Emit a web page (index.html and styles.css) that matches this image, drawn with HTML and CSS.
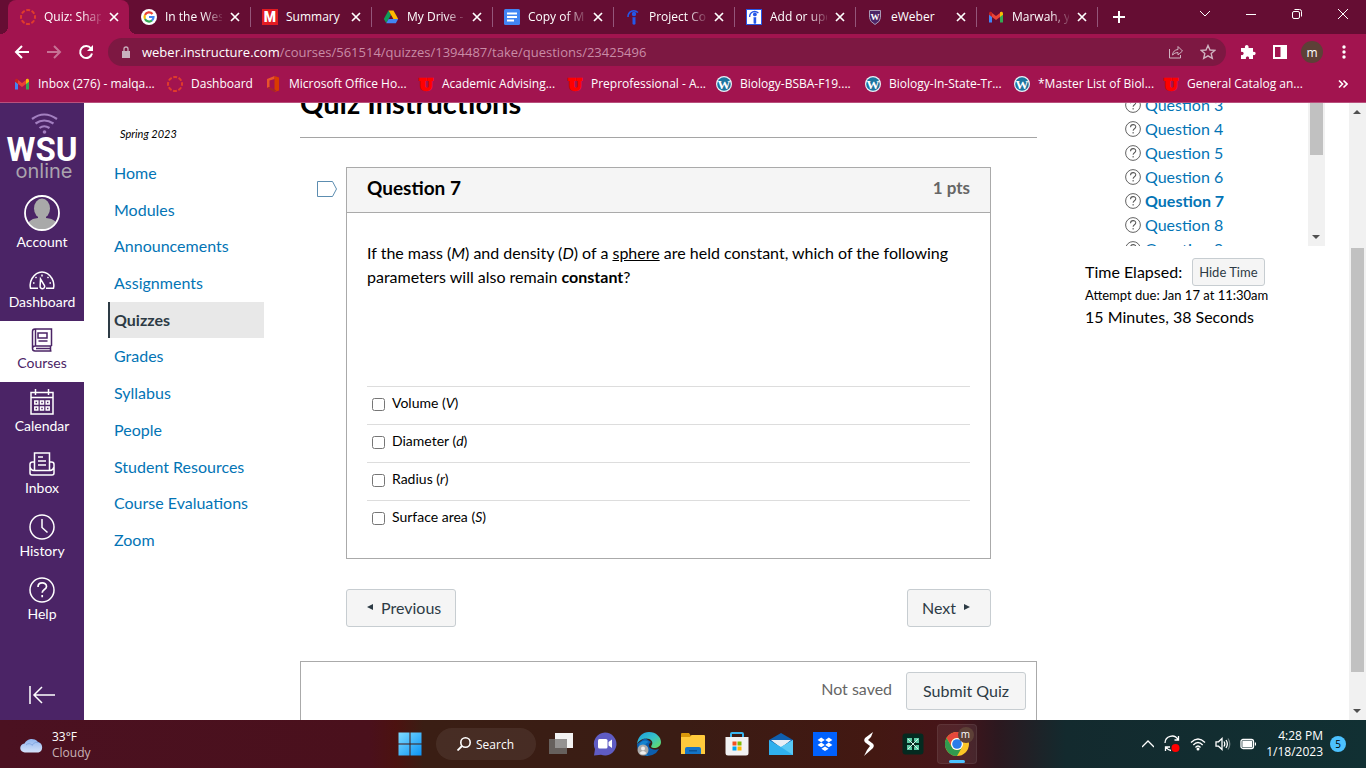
FILE: index.html
```
<!DOCTYPE html>
<html lang="en">
<head>
  <meta charset="UTF-8">
  <meta name="viewport" content="width=device-width, initial-scale=1">
  <title>Quiz: Shape</title>
  <link rel="stylesheet" href="styles.css">
</head>
<body>

  <!-- Shared icons -->
  <svg class="sprite" aria-hidden="true">
    <symbol id="close" viewBox="0 0 10 10"><path d="M1 1l8 8M9 1l-8 8" stroke="#fff" stroke-width="1.7"/></symbol>
    <symbol id="canvas" viewBox="0 0 16 16"><circle cx="8" cy="8" r="7" fill="none" stroke="#e03c2c" stroke-width="2" stroke-dasharray="3.9 1.6" stroke-dashoffset="2"/></symbol>
    <symbol id="gmail" viewBox="0 0 16 16">
      <path d="M1 4v9.5h3V7z" fill="#4285f4"/><path d="M15 4v9.5h-3V7z" fill="#34a853"/>
      <path d="M4 4l4 3 4-3v4l-4 3-4-3z" fill="#ea4335"/>
      <path d="M1 4.5C1 2.500 3 2.300 4 3.200V8L1 5.800z" fill="#c5221f"/><path d="M15 4.500c0-2-2-2.200-3-1.300V8l3-2.200z" fill="#fbbc04"/>
    </symbol>
    <symbol id="utah" viewBox="0 0 16 16"><text x="8" y="13.500" text-anchor="middle" font-family="DejaVu Serif" font-weight="bold" font-size="15" fill="#f00" stroke="#f00" stroke-width="2.400">U</text></symbol>
    <symbol id="wordpress" viewBox="0 0 16 16">
      <circle cx="8" cy="8" r="8" fill="#e9f3f7"/><circle cx="8" cy="8" r="6.800" fill="#1d759f"/>
      <text x="8" y="12.500" text-anchor="middle" font-family="Liberation Serif" font-weight="bold" font-size="13" fill="#fff">W</text>
    </symbol>
    <symbol id="indeed" viewBox="0 0 16 16"><path d="M3 8C3 2 9 0 13 3.500" fill="none" stroke="currentColor" stroke-width="1.600"/><circle cx="9" cy="5" r="2.200" fill="currentColor"/><path d="M7.500 8q1.500.6 3 0v7q-1.500 1.400-3 0z" fill="currentColor"/></symbol>
    <symbol id="question" viewBox="0 0 26 26"><circle cx="13" cy="13" r="12" fill="none" stroke="currentColor" stroke-width="1.500"/><path d="M9 10c0-5.500 8.500-5.200 8.500-.6 0 3.300-4.300 3-4.300 6.400M13.200 18v2.200" fill="none" stroke="currentColor" stroke-width="1.700"/></symbol>
  </svg>

  <header class="browser">
    <div class="tabs" role="tablist">
      <div class="tab active" role="tab">
        <svg class="favicon"><use href="#canvas"/></svg>
        <span class="tab-title">Quiz: Shape</span>
        <button class="tab-close" aria-label="Close"><svg><use href="#close"/></svg></button>
      </div>
      <div class="tab" role="tab">
        <svg class="favicon" viewBox="0 0 16 16"><circle cx="8" cy="8" r="8" fill="#fff"/><g fill="none" stroke-width="2.200"><path d="M11.500 5A4.500 4.500 0 0 0 4 6" stroke="#ea4335"/><path d="M4 6a4.500 4.500 0 0 0 0 4" stroke="#fbbc05"/><path d="M4 10a4.500 4.500 0 0 0 7 1.400" stroke="#34a853"/><path d="M11 11.400A4.500 4.500 0 0 0 12.500 8H8" stroke="#4285f4"/></g></svg>
        <span class="tab-title">In the West</span>
        <button class="tab-close" aria-label="Close"><svg><use href="#close"/></svg></button>
      </div>
      <div class="tab" role="tab">
        <svg class="favicon" viewBox="0 0 16 16"><path d="M0 0h16v16H0z" fill="#e31b23"/><text x="8" y="13" text-anchor="middle" font-family="Roboto" font-weight="900" font-size="14" fill="#fff">M</text></svg>
        <span class="tab-title">Summary</span>
        <button class="tab-close" aria-label="Close"><svg><use href="#close"/></svg></button>
      </div>
      <div class="tab" role="tab">
        <svg class="favicon" viewBox="0 0 16 16"><path d="M5.500 1.500L.8 10l2.400 4L8 6z" fill="#0f9d58"/><path d="M5.500 1.500h5L15.200 10h-4.800z" fill="#ffba00"/><path d="M5.600 10h9.600l-2.400 4.200H3.200z" fill="#4285f4"/></svg>
        <span class="tab-title">My Drive - G</span>
        <button class="tab-close" aria-label="Close"><svg><use href="#close"/></svg></button>
      </div>
      <div class="tab" role="tab">
        <svg class="favicon" viewBox="0 0 16 16"><rect width="16" height="16" rx="1.500" fill="#4285f4"/><path d="M3 4.500h10M3 8h10M3 11.500h7" stroke="#fff" stroke-width="1.800"/></svg>
        <span class="tab-title">Copy of Ma</span>
        <button class="tab-close" aria-label="Close"><svg><use href="#close"/></svg></button>
      </div>
      <div class="tab" role="tab">
        <svg class="favicon indeed"><use href="#indeed"/></svg>
        <span class="tab-title">Project Coo</span>
        <button class="tab-close" aria-label="Close"><svg><use href="#close"/></svg></button>
      </div>
      <div class="tab" role="tab">
        <svg class="favicon indeed boxed"><use href="#indeed"/></svg>
        <span class="tab-title">Add or upd</span>
        <button class="tab-close" aria-label="Close"><svg><use href="#close"/></svg></button>
      </div>
      <div class="tab" role="tab">
        <svg class="favicon" viewBox="0 0 16 16"><path d="M2.500 1.500h11v7q0 4-5.500 7-5.500-3-5.500-7z" fill="#4b2466" stroke="#a89ab5"/><text x="8" y="10.500" text-anchor="middle" font-family="Liberation Serif" font-weight="bold" font-size="9" fill="#fff">W</text></svg>
        <span class="tab-title">eWeber</span>
        <button class="tab-close" aria-label="Close"><svg><use href="#close"/></svg></button>
      </div>
      <div class="tab" role="tab">
        <svg class="favicon"><use href="#gmail"/></svg>
        <span class="tab-title">Marwah, yo</span>
        <button class="tab-close" aria-label="Close"><svg><use href="#close"/></svg></button>
      </div>
      <button class="new-tab" aria-label="New tab"><svg viewBox="0 0 12 12"><path d="M6 0v12M0 6h12" stroke="#fff" stroke-width="2"/></svg></button>
      <div class="window-buttons">
        <button aria-label="Search tabs"><svg viewBox="0 0 12 12"><path d="M1 3l5 5 5-5"/></svg></button>
        <button aria-label="Minimize"><svg viewBox="0 0 12 12"><path d="M1 6.500h10"/></svg></button>
        <button aria-label="Restore"><svg viewBox="0 0 12 12"><rect x="1.500" y="3.500" width="7" height="7" rx="1.500"/><path d="M3.500 1.500h5q2 0 2 2v5"/></svg></button>
        <button aria-label="Close window"><svg viewBox="0 0 12 12"><path d="M1 1l10 10M11 1L1 11"/></svg></button>
      </div>
    </div>

    <div class="toolbar">
      <button aria-label="Back"><svg viewBox="0 0 16 16"><path d="M15 8H2M8 2L2 8l6 6"/></svg></button>
      <button class="dim" aria-label="Forward"><svg viewBox="0 0 16 16"><path d="M1 8h13M8 2l6 6-6 6"/></svg></button>
      <button aria-label="Reload"><svg viewBox="0 0 16 16"><path d="M13 4.500A6 6 0 1 0 14 9.500"/><path d="M15 1v6H9z" fill="#fff" stroke="none"/></svg></button>
      <div class="address">
        <svg class="lock" viewBox="0 0 8 12"><path d="M0 5h8v7H0z" fill="#c9b0bd"/><path d="M2 5V3q0-2 2-2t2 2v2" fill="none" stroke="#c9b0bd" stroke-width="1.300"/></svg>
        <div class="url" role="textbox" aria-label="Address">weber.instructure.com<span>/courses/561514/quizzes/1394487/take/questions/23425496</span></div>
        <svg class="address-icon" viewBox="0 0 16 16"><path d="M1.500 5v9h11v-3M4.500 11Q5 6 10 5.500V2.500L14.500 7 10 11V8.500q-3.500 0-5.500 2.500z"/></svg>
        <svg class="address-icon" viewBox="0 0 16 16"><path d="M8 1.500l2 4.500 4.800.4-3.600 3.200 1.100 4.800L8 11.800l-4.300 2.600 1.100-4.800L1.200 6.400 6 6z" stroke-width="1.400"/></svg>
      </div>
      <button aria-label="Extensions"><svg viewBox="0 0 16 16"><path d="M1 4h4c-1-4 4.500-4 3.500 0H13v4c3.500-1 3.500 4 0 3v4H9c1-3.500-4-3.500-3 0H1v-4c3.500 1 3.500-4 0-3z" fill="#fff" stroke="none"/></svg></button>
      <button aria-label="Side panel"><svg viewBox="0 0 16 16"><path d="M2 2h12v12H2z"/><path d="M9.500 2H14v12H9.500z" fill="#fff"/></svg></button>
      <button class="profile">m</button>
      <button aria-label="Menu"><svg viewBox="0 0 16 16"><g fill="#fff" stroke="none"><circle cx="8" cy="3" r="1.700"/><circle cx="8" cy="8" r="1.700"/><circle cx="8" cy="13" r="1.700"/></g></svg></button>
    </div>

    <nav class="bookmarks">
      <a href="#"><svg><use href="#gmail"/></svg>Inbox (276) - malqa...</a>
      <a href="#"><svg><use href="#canvas"/></svg>Dashboard</a>
      <a href="#"><svg viewBox="0 0 16 16"><path d="M9.500 0L2 3v9l2.500-1V4.500l5-1.500z" fill="#e8542a"/><path d="M9.500 0L14 1.500v13L9.500 16z" fill="#d83b01"/><path d="M4.500 11L2 12l7.500 4 2-1.500z" fill="#a4262c"/></svg>Microsoft Office Ho...</a>
      <a href="#"><svg><use href="#utah"/></svg>Academic Advising...</a>
      <a href="#"><svg><use href="#utah"/></svg>Preprofessional - A...</a>
      <a href="#"><svg><use href="#wordpress"/></svg>Biology-BSBA-F19....</a>
      <a href="#"><svg><use href="#wordpress"/></svg>Biology-In-State-Tr...</a>
      <a href="#"><svg><use href="#wordpress"/></svg>*Master List of Biol...</a>
      <a href="#"><svg><use href="#utah"/></svg>General Catalog an...</a>
      <button class="more" aria-label="More bookmarks"><svg viewBox="0 0 10 10"><path d="M1 1.500L4.500 5 1 8.500M5.500 1.500L9 5 5.500 8.500" fill="none" stroke="#fff" stroke-width="1.600"/></svg></button>
    </nav>
  </header>

  <div class="page">
    <nav class="global-nav">
      <a class="logo" href="#" aria-label="WSU online">
        <svg viewBox="0 0 84 85">
          <g fill="none" stroke="#a37fc0" stroke-width="2.200"><path d="M32 16q12-9 25 0M35.500 20.500q8.500-6 18 0M39.500 25q4.500-3.500 10 0"/></g>
          <circle cx="44.500" cy="29" r="1.800" fill="#a37fc0"/>
          <text x="42" y="58" text-anchor="middle" font-family="Roboto" font-weight="bold" font-size="33" fill="#fff">WSU</text>
          <text x="44" y="75" text-anchor="middle" font-family="Inter" font-size="20" fill="#aaa3ae">online</text>
        </svg>
      </a>
      <a href="#">
        <svg width="36" height="36" viewBox="0 0 36 36"><clipPath id="face"><circle cx="18" cy="18" r="16.500"/></clipPath><g clip-path="url(#face)" fill="#a9a9a9"><ellipse cx="18" cy="13.500" rx="8" ry="10"/><path d="M14 20h8v3q13 1 13 13H2q0-12 12-13z"/></g><circle cx="18" cy="18" r="17" fill="none" stroke="#fff" stroke-width="1.800"/></svg>
        Account
      </a>
      <a href="#">
        <svg width="26" height="23" viewBox="0 0 26 23"><g fill="none" stroke="#fff" stroke-width="1.500"><path d="M9 20.200H1.500Q.3 15 3 10.500 7 4 13 4t10 6.500q2.700 4.500 1.500 9.700H17"/><path d="M11.500 11l4 6.500a2.300 2.300 0 1 1-4.400.5z"/><path d="M13 6.500v2M6.500 9l1 1M19.500 9l-1 1M4 15h1.500M20.500 15H22"/></g></svg>
        Dashboard
      </a>
      <a class="active" href="#">
        <svg width="22" height="24" viewBox="0 0 22 24"><g fill="none" stroke="currentColor" stroke-width="1.500"><path d="M20.500 18V1H4Q1.500 1 1.500 3.500v17Q1.500 23 4 23h16.500M20.500 18H4q-2.500 0-2.500 2.500M19.500 18v5M4.500 1v17M5 20.500h14"/><path d="M7 5h9v5H7zM7.500 13h9"/></g></svg>
        Courses
      </a>
      <a href="#">
        <svg width="24" height="26" viewBox="0 0 24 26"><g fill="none" stroke="#fff" stroke-width="1.500"><path d="M1 3.500h22V25H1zM1 8.500h22M5.500 0v6M18.500 0v6"/><path d="M4.800 12h3v3h-3zM10.500 12h3v3h-3zM16.200 12h3v3h-3zM4.800 18h3v3h-3zM10.500 18h3v3h-3zM16.200 18h3v3h-3z"/></g></svg>
        Calendar
      </a>
      <a href="#">
        <svg width="26" height="25" viewBox="0 0 26 25"><g fill="none" stroke="#fff" stroke-width="1.500"><path d="M5.500 18V1h15v17M5.500 10H3.500Q1 10 1 12.500V21q0 2 2 2h20q2 0 2-2v-8.500q0-2.500-2.500-2.500h-2M1 15q1 3.500 4 3.500h16q3 0 4-3.500M9 5h5M9 9h8M9 13h8"/></g></svg>
        Inbox
      </a>
      <a href="#">
        <svg width="26" height="26" viewBox="0 0 26 26"><g fill="none" stroke="#fff" stroke-width="1.500"><circle cx="13" cy="13" r="12"/><path d="M13 5v8.500l5.500 5"/></g></svg>
        History
      </a>
      <a href="#">
        <svg width="26" height="26"><use href="#question"/></svg>
        Help
      </a>
      <button class="collapse" aria-label="Minimize navigation"><svg viewBox="0 0 26 18"><path d="M1 0v18M26 9H5M13 1L5 9l8 8" fill="none" stroke="#fff" stroke-width="1.500"/></svg></button>
    </nav>

    <nav class="course-menu">
      <p>Spring 2023</p>
      <ul>
        <li><a href="#">Home</a></li>
        <li><a href="#">Modules</a></li>
        <li><a href="#">Announcements</a></li>
        <li><a href="#">Assignments</a></li>
        <li><a class="active" href="#">Quizzes</a></li>
        <li><a href="#">Grades</a></li>
        <li><a href="#">Syllabus</a></li>
        <li><a href="#">People</a></li>
        <li><a href="#">Student Resources</a></li>
        <li><a href="#">Course Evaluations</a></li>
        <li><a href="#">Zoom</a></li>
      </ul>
    </nav>

    <main class="quiz">
      <h1>Quiz Instructions</h1>
      <div class="question-row">
        <button class="flag" aria-label="Flag question"><svg viewBox="0 0 20 16"><path d="M.5.500h15l4 7.500-4 7.500H.5z" fill="none" stroke="#5c8db0"/></svg></button>
        <section class="question">
          <div class="question-header">
            <h2>Question 7</h2>
            <span>1 pts</span>
          </div>
          <div class="question-body">
            <p>If the mass (<i>M</i>) and density (<i>D</i>) of a <u>sphere</u> are held constant, which of the following parameters will also remain <b>constant</b>?</p>
            <div class="answers">
              <div class="answer"><input type="checkbox" id="a1"><label for="a1">Volume (<i>V</i>)</label></div>
              <div class="answer"><input type="checkbox" id="a2"><label for="a2">Diameter (<i>d</i>)</label></div>
              <div class="answer"><input type="checkbox" id="a3"><label for="a3">Radius (<i>r</i>)</label></div>
              <div class="answer"><input type="checkbox" id="a4"><label for="a4">Surface area (<i>S</i>)</label></div>
            </div>
          </div>
        </section>
      </div>
      <div class="pager">
        <button class="btn"><svg viewBox="0 0 6 8"><path d="M6 1v6L0 4z" fill="currentColor"/></svg>Previous</button>
        <button class="btn">Next<svg viewBox="0 0 6 8"><path d="M0 1v6l6-3z" fill="currentColor"/></svg></button>
      </div>
      <div class="submit-bar">
        <span>Not saved</span>
        <button class="btn">Submit Quiz</button>
      </div>
    </main>

    <aside class="sidebar">
      <div class="question-list">
        <ul>
          <li><svg><use href="#question"/></svg><a href="#">Question 3</a></li>
          <li><svg><use href="#question"/></svg><a href="#">Question 4</a></li>
          <li><svg><use href="#question"/></svg><a href="#">Question 5</a></li>
          <li><svg><use href="#question"/></svg><a href="#">Question 6</a></li>
          <li><svg><use href="#question"/></svg><a class="current" href="#">Question 7</a></li>
          <li><svg><use href="#question"/></svg><a href="#">Question 8</a></li>
          <li><svg><use href="#question"/></svg><a href="#">Question 9</a></li>
        </ul>
        <div class="scrollbar list-scroll">
          <div class="thumb"></div>
          <svg viewBox="0 0 8 4"><path d="M0 0h8L4 4z" fill="#505050"/></svg>
        </div>
      </div>
      <div class="timer">
        <div class="elapsed">Time Elapsed: <button class="btn small">Hide Time</button></div>
        <p class="due">Attempt due: Jan 17 at 11:30am</p>
        <p>15 Minutes, 38 Seconds</p>
      </div>
    </aside>

    <div class="scrollbar page-scroll">
      <svg viewBox="0 0 8 4"><path d="M0 4h8L4 0z" fill="#505050"/></svg>
      <div class="track"><div class="thumb"></div></div>
      <svg viewBox="0 0 8 4"><path d="M0 0h8L4 4z" fill="#505050"/></svg>
    </div>
  </div>

  <footer class="taskbar">
    <div class="weather">
      <svg viewBox="0 0 24 16"><defs><linearGradient id="cloud" x2="0" y2="1"><stop stop-color="#8fb4ee"/><stop offset="1" stop-color="#d4e2fa"/></linearGradient></defs><path d="M5 15.500a4.500 4.500 0 0 1-.5-9A8 8 0 0 1 18 5a5.500 5.500 0 0 1 .5 10.500z" fill="url(#cloud)"/><path d="M6 8q3-3 6.500.5M12 8q3-4 7-2.500" fill="none" stroke="#7ca2de" stroke-width=".8"/></svg>
      <div>33°F<br><span>Cloudy</span></div>
    </div>

    <div class="apps">
      <button class="app" aria-label="Start"><svg viewBox="0 0 24 24"><defs><linearGradient id="win" x2="1" y2="1"><stop stop-color="#7fdcff"/><stop offset="1" stop-color="#0b93f5"/></linearGradient></defs><path d="M.5.500h11v11H.5zM12.500.500h11v11h-11zM.5 12.500h11v11H.5zM12.500 12.500h11v11h-11z" fill="url(#win)"/></svg></button>
      <button class="search"><svg viewBox="0 0 14 14"><circle cx="8.500" cy="5.500" r="4.700" fill="none" stroke="#fff" stroke-width="1.600"/><path d="M5 9l-4.500 4.500" stroke="#fff" stroke-width="1.800"/></svg>Search</button>
      <button class="app" aria-label="Task view"><svg viewBox="0 0 24 24"><path d="M6 1h18v15H6z" fill="#f2f2f2"/><path d="M0 7h18v15H0z" fill="#6b6865" opacity=".9"/><path d="M6 7h12v9H6z" fill="#949291"/></svg></button>
      <button class="app" aria-label="Chat"><svg viewBox="0 0 24 24"><path d="M12 .5a11.500 11.500 0 1 1-4 22.300L1 23.500l1-6.500A11.500 11.500 0 0 1 12 .5z" fill="#5f5cc4"/><rect x="5" y="7" width="9.500" height="9.500" rx="1.500" fill="#fff"/><path d="M15.500 10l3.500-2.500V16l-3.500-2.500z" fill="#fff"/></svg></button>
      <button class="app" aria-label="Edge"><svg viewBox="0 0 24 24"><defs><linearGradient id="edge" x2="1" y2="1"><stop stop-color="#1b9de2"/><stop offset=".5" stop-color="#35c1c8"/><stop offset="1" stop-color="#6be05a"/></linearGradient></defs><path d="M0 12Q0 20 6 23q7 2.500 13-2l3-4q-5 2-9-1-3-3 1-6L8 6z" fill="#0c5eae"/><path d="M0 12C1 4 6 0 12 0c7 0 12 5 12 10 0 4-3.500 6-7 6-2.500 0-3.500-1-2.500-2.500C17 10 14 6.500 9 6.500 5 6.500 1.500 9 0 12z" fill="url(#edge)"/><path d="M8 15q0-4 4-5-4-3-8 0-4 4-1 9 3 4 8 5-3-4-3-9z" fill="#1484d0"/><circle cx="6" cy="18" r="5.500" fill="#aaa"/><circle cx="6" cy="16.500" r="2" fill="#eee"/><path d="M2.500 21q3.500-4 7 0-3.500 3-7 0z" fill="#eee"/></svg></button>
      <button class="app" aria-label="File Explorer"><svg viewBox="0 0 24 24"><path d="M0 2q0-1 1-1h7l2 3v4H0z" fill="#d9980b"/><path d="M0 5h9l1.500-2H23q1 0 1 1v18H0z" fill="#ffca3c"/><path d="M4 22v-5q0-2 2-2h12q2 0 2 2v5z" fill="#1474c6"/><path d="M8 18h8v1.500H8z" fill="#0b5396"/></svg></button>
      <button class="app" aria-label="Microsoft Store"><svg viewBox="0 0 24 24"><path d="M6 7V2q0-1 1-1h10q1 0 1 1v5" fill="none" stroke="#39b5f0" stroke-width="2"/><path d="M.5 5h23v16q0 2.500-2.500 2.500H3Q.5 23.500.5 21z" fill="#f2f2f2"/><path d="M7.500 9.500h4v4h-4z" fill="#f25022"/><path d="M12.500 9.500h4v4h-4z" fill="#7fba00"/><path d="M7.500 14.500h4v4h-4z" fill="#00a4ef"/><path d="M12.500 14.500h4v4h-4z" fill="#ffb900"/></svg></button>
      <button class="app" aria-label="Mail"><svg viewBox="0 0 24 24"><path d="M0 8l12-7 12 7v3H0z" fill="#0f5fae"/><path d="M2 8h20L12 16z" fill="#e7eef6"/><path d="M0 8l12 7 12-7v15H0z" fill="#30b0ee"/><path d="M12 15L24 8v15z" fill="#58c8f5"/></svg></button>
      <button class="app" aria-label="Dropbox"><svg viewBox="0 0 24 24"><path d="M0 0h24v24H0z" fill="#0061fe"/><path d="M8.200 5.500l3.600 2.400-3.600 2.400-3.600-2.400zM15.800 5.500l3.600 2.400-3.600 2.400-3.600-2.400zM8.200 10.500l3.600 2.400-3.600 2.400-3.600-2.400zM15.800 10.500l3.600 2.400-3.600 2.400-3.600-2.400zM12 14.500l3.600 2.300L12 19l-3.600-2.200z" fill="#fff"/></svg></button>
      <button class="app" aria-label="S app"><svg viewBox="0 0 24 24"><path d="M16 0l-8 6q-2 3 1 5l4 3-3 4-3 6 9-8q2-3-1-5l-4-3 3-3z" fill="#fff"/></svg></button>
      <button class="app" aria-label="Notes"><svg viewBox="0 0 24 24"><rect x="1.500" y="1.500" width="21" height="21" rx="3" fill="#042a20"/><path d="M6 6h5v3l-2 2H6zM13 6h5v5h-3l-2-2zM6 13h3l2 2v3H6zM15 13h3v5h-5v-3z" fill="#5cc9a4"/><path d="M7 7l10 10M17 7L7 17" stroke="#d6f5e9"/></svg></button>
      <button class="app open" aria-label="Chrome">
        <svg viewBox="0 0 24 24"><circle cx="12" cy="12" r="12" fill="#fbc116"/><path d="M1.600 6A12 12 0 0 1 22.400 6H12a6 6 0 0 0-5.200 9z" fill="#e33b2e"/><path d="M1.600 6A12 12 0 0 0 12 24l5.200-9A6 6 0 0 1 6.800 15z" fill="#229342"/><circle cx="12" cy="12" r="6" fill="#fff"/><circle cx="12" cy="12" r="4.800" fill="#1a73e8"/></svg>
        <span class="app-user">m</span>
      </button>
    </div>

    <div class="tray">
      <svg width="12" height="12" viewBox="0 0 12 12"><path d="M0 9l6-6 6 6"/></svg>
      <svg width="18" height="18" viewBox="0 0 18 18"><path d="M2 8A7 7 0 0 1 15 4.500M15.500 1v4h-4M8 15.500A7 7 0 0 1 3 12M7 12H2.500v4"/><circle cx="12.500" cy="13" r="4" fill="#f00" stroke="none"/></svg>
      <svg width="16" height="14" viewBox="0 0 16 14"><path d="M1 5.500q7-7 14 0M3.300 8q4.700-5 9.400 0M5.500 10.500q2.500-3 5 0"/><circle cx="8" cy="12" r="1.500" fill="#fff" stroke="none"/></svg>
      <svg width="16" height="14" viewBox="0 0 16 14"><path d="M1 4.800h2.500L7 1.500v11L3.500 9.200H1zM9 4.500q1.500 2.500 0 5M11 3q2.700 4 0 8"/><path d="M13 1.500q3.500 5.500 0 11" opacity=".4"/></svg>
      <svg width="16" height="12" viewBox="0 0 16 12"><rect x="1" y="1.500" width="12.500" height="9" rx="2"/><path d="M3 3.500h8.500v5H3z" fill="#fff"/><path d="M15.500 4.500v3"/></svg>
      <div class="clock">4:28 PM<br>1/18/2023</div>
      <span class="badge">5</span>
    </div>
  </footer>

</body>
</html>
```

FILE: styles.css
```
* {
  box-sizing: border-box;
}

body {
  margin: 0;
  height: 100vh;
  display: flex;
  flex-direction: column;
  overflow: hidden;
  font-family: Lato, sans-serif;
  font-size: 16px;
  line-height: 24px;
  color: #000;
  background: #fff;
}

button {
  font-family: inherit;
  padding: 0;
  border: none;
  background: none;
  color: inherit;
  cursor: pointer;
}

a {
  color: #0374b5;
  text-decoration: none;
}

h1, h2, p, ul {
  margin: 0;
  padding: 0;
}

ul {
  list-style: none;
}

svg {
  display: block;
  flex-shrink: 0;
}

.sprite {
  display: none;
}

/* Browser */
.browser,
.taskbar {
  font-family: "Open Sans", sans-serif;
  font-size: 12px;
  line-height: 16px;
  color: #fff;
}

.browser {
  background: #a2144f;
  border-bottom: 1px solid #b8507c;
}

.tabs {
  height: 34px;
  display: flex;
  padding-left: 8px;
  background: #650d33;
}

.tab {
  position: relative;
  flex: 0 1 121px;
  min-width: 0;
  display: flex;
  align-items: center;
  gap: 8px;
  padding: 0 10px 0 12px;
}

.tab:not(.active)::after {
  content: "";
  position: absolute;
  right: -1px;
  top: 7px;
  width: 1px;
  height: 20px;
  background: #94567a;
}

.tab.active {
  background: #a2144f;
  border-radius: 8px 8px 0 0;
}

.tab.active::before,
.tab.active::after {
  content: "";
  position: absolute;
  bottom: 0;
  width: 8px;
  height: 8px;
}

.tab.active::before {
  left: -8px;
  background: radial-gradient(circle at 0 0, transparent 8px, #a2144f 8px);
}

.tab.active::after {
  right: -8px;
  background: radial-gradient(circle at 100% 0, transparent 8px, #a2144f 8px);
}

.favicon {
  width: 16px;
  height: 16px;
}

.indeed {
  color: #2557e8;
}

.indeed.boxed {
  background: #fff;
  border: 1px solid #2557e8;
}

.tab-title {
  flex: 1;
  overflow: hidden;
  white-space: nowrap;
  -webkit-mask-image: linear-gradient(to right, #000 38px, transparent 60px);
  mask-image: linear-gradient(to right, #000 38px, transparent 60px);
}

.tab:nth-child(3) .tab-title,
.tab:nth-child(8) .tab-title {
  -webkit-mask-image: none;
  mask-image: none;
}

.tab-close svg {
  width: 10px;
  height: 10px;
}

.new-tab {
  width: 44px;
}

.new-tab svg {
  width: 12px;
  height: 12px;
  margin: auto;
}

.window-buttons {
  display: flex;
  margin-left: auto;
  padding-bottom: 6px;
}

.window-buttons button {
  width: 46px;
}

.window-buttons svg {
  width: 12px;
  height: 12px;
  margin: auto;
  fill: none;
  stroke: #fff;
}

.toolbar {
  height: 34px;
  display: flex;
  align-items: center;
  gap: 16px;
  padding: 2px 14px 0;
}

.toolbar > button svg {
  width: 16px;
  height: 16px;
  fill: none;
  stroke: #fff;
  stroke-width: 2;
}

.toolbar .dim {
  opacity: 0.4;
}

.address {
  flex: 1;
  height: 28px;
  display: flex;
  align-items: center;
  gap: 16px;
  margin: 0 -2px;
  padding: 0 10px 0 14px;
  border-radius: 14px;
  background: #7d1842;
}

.lock {
  width: 8px;
  height: 12px;
}

.url {
  flex: 1;
  font-size: 13px;
  margin-left: -4px;
}

.url span {
  color: #c98ba6;
}

.address-icon {
  width: 16px;
  height: 16px;
  fill: none;
  stroke: #d0b4c1;
}

.profile {
  width: 22px;
  height: 22px;
  margin: 0 -3px;
  border-radius: 50%;
  background: #5d4037;
  font-size: 12px;
}

.bookmarks {
  height: 34px;
  display: grid;
  grid-template-columns: 153px 98px 153px repeat(6, 149px) auto;
  align-items: center;
  padding: 0 18px 2px 14px;
}

.bookmarks a {
  display: flex;
  gap: 8px;
  color: #fff;
  white-space: nowrap;
}

.bookmarks a svg {
  width: 16px;
  height: 16px;
}

.more {
  justify-self: end;
}

.more svg {
  width: 10px;
  height: 10px;
}

/* Page */
.page {
  flex: 1;
  min-height: 0;
  display: flex;
  overflow: hidden;
}

.global-nav {
  width: 84px;
  flex-shrink: 0;
  display: flex;
  flex-direction: column;
  background: #4b2466;
}

.global-nav a {
  display: flex;
  flex-direction: column;
  align-items: center;
  padding: 7px 0 8px;
  font-size: 14px;
  line-height: 22px;
  color: #fff;
}

.global-nav .logo {
  padding: 0;
}

.logo svg {
  width: 84px;
  height: 85px;
}

.global-nav a.active {
  background: #fff;
  color: #4b2466;
}

.collapse {
  margin: auto auto 16px;
}

.collapse svg {
  width: 26px;
  height: 18px;
}

.course-menu {
  width: 180px;
  flex-shrink: 0;
  padding: 22px 0 0 24px;
}

.course-menu p {
  padding-left: 12px;
  font-size: 11px;
  font-style: italic;
  line-height: 18px;
}

.course-menu ul {
  min-height: 403px;
  margin-top: 12px;
  display: flex;
  flex-direction: column;
  justify-content: space-between;
}

.course-menu a {
  display: block;
  padding: 6px;
}

.course-menu .active {
  padding-left: 4px;
  border-left: 2px solid #2d3b45;
  background: #e8e8e8;
  color: #2d3b45;
  font-weight: bold;
}

.quiz {
  flex: 1;
  min-width: 0;
  margin: 0 48px 0 36px;
}

.quiz h1 {
  margin-top: -18px;
  padding-bottom: 16px;
  border-bottom: 1px solid #a5a5a5;
  font-size: 29px;
  line-height: 36px;
}

.question-row {
  display: flex;
  align-items: flex-start;
  margin: 29px 46px 0 17px;
}

.flag {
  margin: 14px 9px 0 0;
}

.flag svg {
  width: 20px;
  height: 16px;
}

.question {
  flex: 1;
  border: 1px solid #aaa;
}

.question-header {
  display: flex;
  justify-content: space-between;
  padding: 8px 20px 12px;
  border-bottom: 1px solid #aaa;
  background: #f5f5f5;
  font-size: 17px;
  font-weight: bold;
  color: #666;
}

.question-header h2 {
  font-size: 19px;
  line-height: 24px;
  color: #000;
}

.question-body {
  padding: 28px 20px 20px;
}

.answers {
  margin-top: 97px;
}

.answer {
  height: 38px;
  display: flex;
  align-items: flex-start;
  border-top: 1px solid #ddd;
  font-size: 14px;
  line-height: 20px;
}

.answer input {
  width: 13px;
  height: 13px;
  margin: 11px 7px 0 5px;
}

.answer label {
  padding-top: 6px;
}

.btn {
  height: 38px;
  display: inline-flex;
  align-items: center;
  gap: 8px;
  padding: 0 14px 2px 20px;
  border: 1px solid #c7cdd1;
  border-radius: 3px;
  background: #f5f5f5;
  color: #2d3b45;
  font-size: 16px;
}

.btn svg {
  width: 6px;
  height: 8px;
}

.pager {
  display: flex;
  justify-content: space-between;
  margin: 30px 46px 0;
}

.pager .btn:last-child {
  padding: 0 20px 2px 14px;
}

.submit-bar {
  display: flex;
  justify-content: flex-end;
  align-items: center;
  gap: 14px;
  margin-top: 34px;
  padding: 10px 10px 30px;
  border: 1px solid #aaa;
  color: #666;
}

.submit-bar span {
  padding-bottom: 4px;
}

.submit-bar .btn {
  padding: 0 16px 2px;
}

.sidebar {
  width: 240px;
  flex-shrink: 0;
  margin-right: 24px;
}

.question-list {
  display: flex;
  justify-content: space-between;
  max-height: 143px;
  overflow: hidden;
}

.question-list ul {
  margin-top: -10px;
  padding-left: 40px;
}

.question-list li {
  display: flex;
  align-items: center;
  gap: 4px;
}

.question-list svg {
  color: #555;
}

.question-list li svg {
  width: 16px;
  height: 16px;
}

.question-list .current {
  font-weight: bold;
}

.scrollbar {
  width: 17px;
  display: flex;
  flex-direction: column;
  justify-content: space-between;
  background: #f1f1f1;
}

.scrollbar svg {
  width: 8px;
  height: 4px;
  margin: 7px 5px 7px 4px;
}

.thumb {
  width: 13px;
  margin: 0 2px;
  background: #c1c1c1;
}

.list-scroll .thumb {
  height: 52px;
}

.page-scroll .track {
  flex: 1;
  display: flex;
  flex-direction: column;
  justify-content: flex-end;
  padding-bottom: 30px;
}

.page-scroll .thumb {
  height: 77%;
}

.timer {
  padding-top: 12px;
}

.elapsed {
  display: flex;
  align-items: center;
  gap: 10px;
}

.btn.small {
  height: 28px;
  padding: 0 6px;
  font-size: 13px;
}

.timer .due {
  font-size: 13px;
  line-height: 18px;
}

.timer p:last-child {
  line-height: 26px;
}

/* Taskbar */
.taskbar {
  height: 48px;
  display: grid;
  grid-template-columns: 1fr auto 1fr;
  align-items: center;
  background: linear-gradient(to right, #4b1121 0, #4a101c 27%, #4c1210 29%, #3a1e14 31%, #3a1c14 50%, #431812 64%, #46141a 70%, #2c181f 73%, #132a2e 78%, #113033 100%);
}

.weather {
  display: flex;
  align-items: center;
  gap: 8px;
  padding: 2px 0 0 20px;
}

.weather svg {
  width: 24px;
  height: 16px;
}

.weather span {
  color: #c9b3b8;
}

.apps {
  display: flex;
  align-items: center;
}

.app {
  position: relative;
  width: 44px;
  height: 40px;
}

.app svg {
  width: 24px;
  height: 24px;
  margin: auto;
}

.app.open::before {
  content: "";
  position: absolute;
  inset: 0 2px;
  border: 1px solid #ffffff12;
  border-radius: 4px;
  background: #ffffff12;
}

.app.open::after {
  content: "";
  position: absolute;
  left: 14px;
  bottom: 1px;
  width: 16px;
  height: 3px;
  border-radius: 2px;
  background: #4cc2ff;
}

.app-user {
  position: absolute;
  top: 3px;
  right: 5px;
  width: 16px;
  height: 16px;
  border-radius: 50%;
  background: #5d4037;
  font-size: 10px;
  line-height: 14px;
}

.search {
  width: 100px;
  height: 32px;
  display: flex;
  align-items: center;
  justify-content: center;
  gap: 5px;
  margin: 0 3px 0 4px;
  border-radius: 16px;
  background: #ffffff12;
  font-size: 12px;
}

.search svg {
  width: 14px;
  height: 14px;
}

.tray {
  display: flex;
  align-items: center;
  justify-content: flex-end;
  gap: 9px;
  padding-right: 20px;
}

.tray svg {
  fill: none;
  stroke: #fff;
  stroke-width: 1.3;
}

.clock {
  margin-left: 1px;
  text-align: right;
}

.badge {
  width: 16px;
  height: 16px;
  margin-left: -2px;
  border-radius: 50%;
  background: #4cc2ff;
  color: #000;
  font-size: 10px;
  text-align: center;
}
```
